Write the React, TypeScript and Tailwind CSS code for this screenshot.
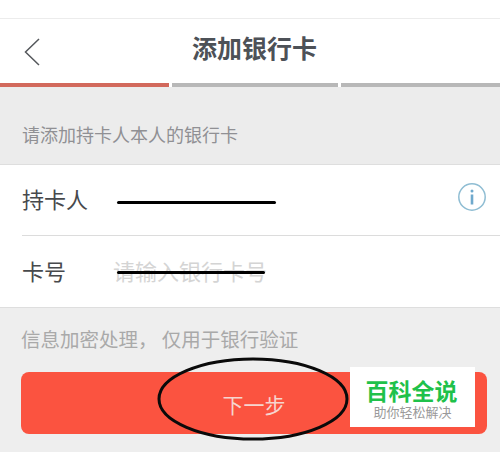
import React from 'react';

const font = { fontFamily: '"Noto Sans CJK SC", "Liberation Sans", sans-serif' };

function BackIcon() {
  return (
    <svg width="18" height="30" viewBox="0 0 18 30" fill="none" stroke="#55585c" strokeWidth="1.5">
      <path d="M16 2 L2.5 15 L16 28" />
    </svg>
  );
}

function InfoIcon() {
  return (
    <svg width="30" height="30" viewBox="0 0 30 30" fill="none">
      <circle cx="15" cy="15" r="13.2" stroke="#8fbdd3" strokeWidth="1.5" />
      <circle cx="15" cy="9" r="1.5" fill="#6fa9cc" />
      <path d="M15 12.5 V22.5" stroke="#6fa9cc" strokeWidth="2.6" />
    </svg>
  );
}

export default function App() {
  return (
    <div className="w-[500px] h-[452px] overflow-hidden bg-[#eeeeee] flex flex-col relative" style={font}>
      <div className="h-[18px] bg-white border-b border-[#ececec] box-content" />
      <div className="h-[64px] bg-white flex items-center relative">
        <div className="absolute left-[23px] top-[18px] flex">
          <BackIcon />
        </div>
        <h1 className="w-full text-center text-[25px] leading-none font-bold text-[#4d5157] pl-[9px] pb-[7px]">添加银行卡</h1>
      </div>
      <div className="flex gap-[3px] h-[4px] bg-white">
        <div className="w-[169px] bg-[#d2695c]" />
        <div className="w-[166px] bg-[#b8b8b8]" />
        <div className="flex-1 bg-[#b8b8b8]" />
      </div>
      <div className="h-[77px] bg-[#ececec] flex items-end pl-[22px] pb-[21px]">
        <p className="text-[18px] leading-none text-[#909094]">请添加持卡人本人的银行卡</p>
      </div>
      <div className="bg-white border-y border-[#dedede] pl-[22px]">
        <div className="h-[71px] flex items-center border-b border-[#dcdcdc] relative">
          <span className="text-[22px] leading-none text-[#47494c] pb-[4px]">持卡人</span>
          <div className="absolute left-[95px] top-[36px] w-[159px] h-[3px] bg-black rounded-full" />
          <div className="absolute right-[13px] top-[17px] flex">
            <InfoIcon />
          </div>
        </div>
        <div className="h-[71px] flex items-center relative">
          <span className="text-[22px] leading-none text-[#47494c] w-[70px] pb-[3px]">卡号</span>
          <span className="text-[22px] leading-none text-[#d4d4d4] ml-[21px] pb-[3px]">请输入银行卡号</span>
          <div className="absolute left-[95px] top-[35px] w-[148px] h-[3px] bg-black rounded-full" />
        </div>
      </div>
      <div className="flex-1 px-[21px] pt-[21px] flex flex-col relative">
        <p className="text-[19.5px] leading-[20px] text-[#a9a9a9] whitespace-pre">信息加密处理， 仅用于银行验证</p>
        <button className="mt-[23px] w-[466px] h-[62px] rounded-[8px] bg-[#fb5340] text-[#f6d5cf] text-[21px] leading-none flex items-center justify-center pt-[2px]">
          下一步
        </button>
        <svg
          className="absolute left-[156px] top-[49px]"
          width="194"
          height="84"
          viewBox="0 0 194 84"
          fill="none"
          stroke="#0a0a0a"
          strokeWidth="3"
        >
          <ellipse cx="97" cy="42" rx="94" ry="40" />
        </svg>
        <div className="absolute left-[350px] top-[59px] w-[125px] h-[60px] bg-white flex flex-col items-center pt-[10px]">
          <span className="text-[23px] leading-[26px] font-bold text-[#1fc14a] pr-[2px]">百科全说</span>
          <span className="text-[13px] leading-[16px] mt-[1px] text-[#9a9a9a]">助你轻松解决</span>
        </div>
      </div>
    </div>
  );
}
